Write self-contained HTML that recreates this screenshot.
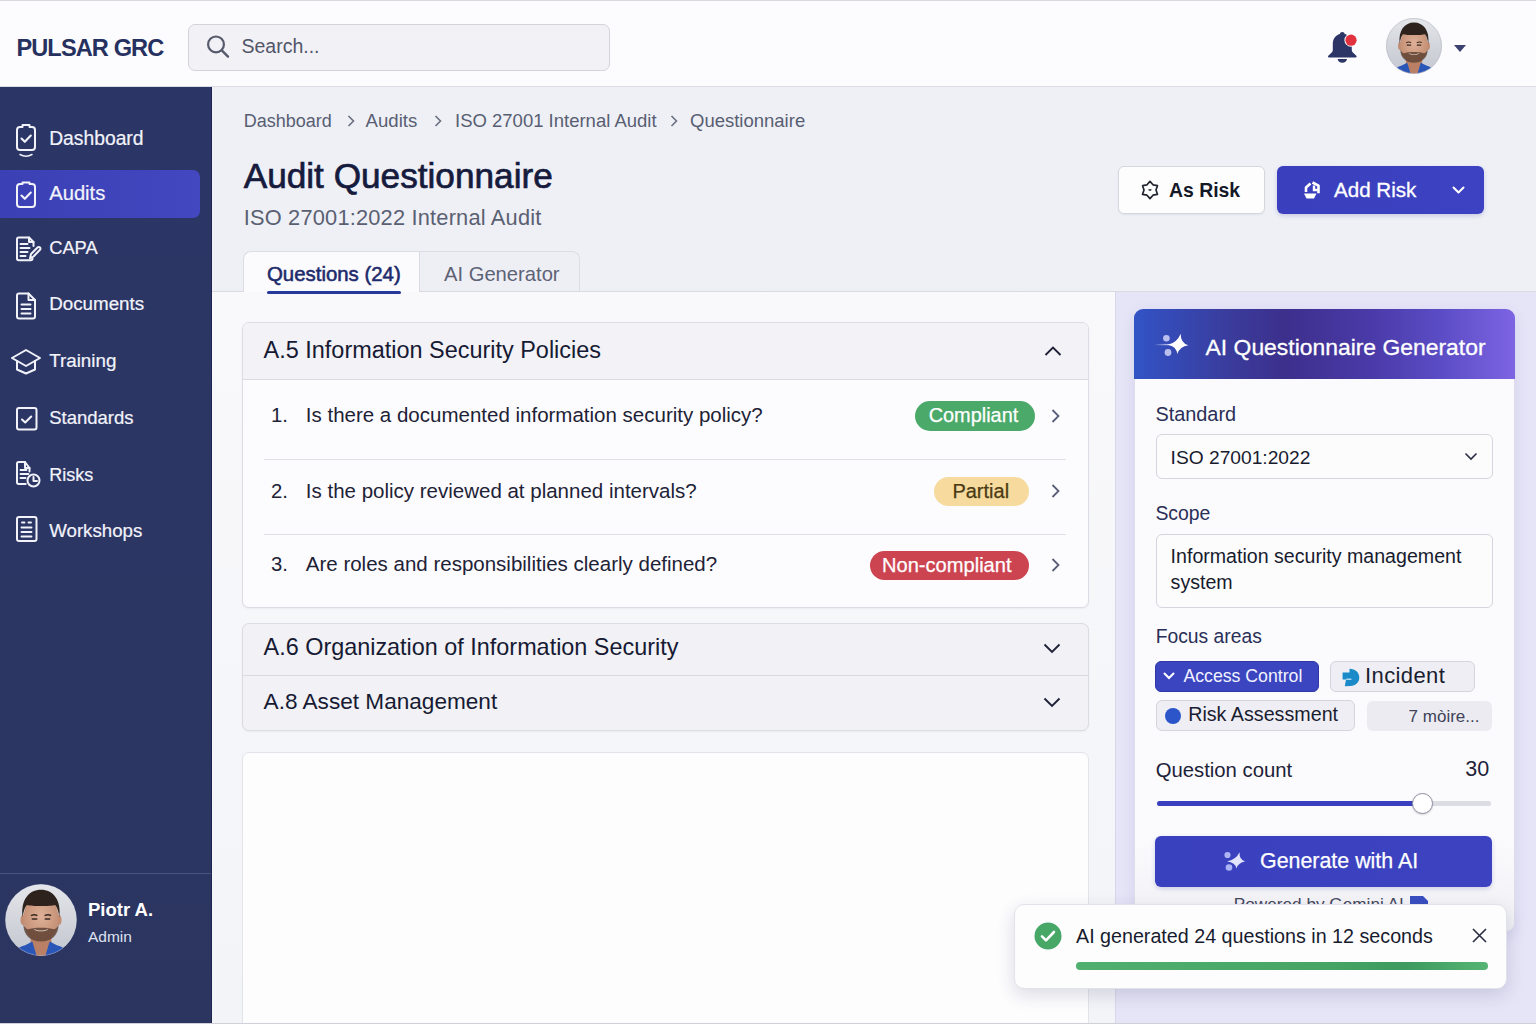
<!DOCTYPE html>
<html><head><meta charset="utf-8"><style>
html,body{margin:0;padding:0;width:1536px;height:1024px;overflow:hidden;background:#f8f8fb;}
body{position:relative;font-family:"Liberation Sans",sans-serif;}
.t{position:absolute;white-space:nowrap;line-height:1;}
.b{position:absolute;}
</style></head><body>
<div class="b" style="left:0px;top:0px;width:1536px;height:87px;background:#fcfcfe;border-top:1px solid #d9d9e0;border-bottom:1px solid #dcdde4;box-sizing:border-box;"></div>
<div class="t " style="left:16.4px;top:36.82px;font-size:23.6px;color:#27315f;font-weight:700;letter-spacing:-0.9px;">PULSAR GRC</div>
<div class="b" style="left:188px;top:23.5px;width:422px;height:47.0px;background:#f1f1f6;border:1.5px solid #d3d3da;border-radius:7px;box-sizing:border-box;"></div>
<svg class="b" style="left:203px;top:32px" width="30" height="30" viewBox="0 0 30 30"><circle cx="13" cy="12.4" r="7.9" fill="none" stroke="#575a6c" stroke-width="2.2"/><line x1="18.8" y1="18.3" x2="25" y2="24.6" stroke="#575a6c" stroke-width="2.4" stroke-linecap="round"/></svg>
<div class="t " style="left:241.5px;top:37.49px;font-size:19.5px;color:#535669;font-weight:400;">Search...</div>
<svg class="b" style="left:1325px;top:29px" width="36" height="36" viewBox="0 0 36 36"><path d="M17.3 3c-1.3 0-2.3.9-2.4 2.1C10.2 6.3 7.8 10.3 7.8 15.3v5.6c0 1-.4 2-1.1 2.7l-3.4 3.2c-.7.7-.2 1.8.8 1.8h26.4c1 0 1.5-1.1.8-1.8l-3.4-3.2c-.7-.7-1.1-1.7-1.1-2.7v-5.6c0-5-2.4-9-7.1-10.2-.1-1.2-1.1-2.1-2.4-2.1z" fill="#2d3566"/><path d="M12.6 30h9.4c-.3 2.4-2.2 3.8-4.7 3.8s-4.4-1.4-4.7-3.8z" fill="#2d3566"/><circle cx="26" cy="11.2" r="6.6" fill="#fcfcfe"/><circle cx="26" cy="11.2" r="5.6" fill="#e2323f"/></svg>
<svg class="b" style="left:1386.0px;top:17.5px" width="56" height="56" viewBox="0 0 100 100"><defs><clipPath id="ch"><circle cx="50" cy="50" r="49.5"/></clipPath><linearGradient id="gh" x1="0" y1="0" x2="0" y2="1"><stop offset="0" stop-color="#e4e6ea"/><stop offset="0.6" stop-color="#cfd2d9"/><stop offset="1" stop-color="#c3c7cf"/></linearGradient><radialGradient id="kh" cx="0.5" cy="0.45" r="0.6"><stop offset="0" stop-color="#deb097"/><stop offset="1" stop-color="#c08b70"/></radialGradient></defs><g clip-path="url(#ch)"><rect width="100" height="100" fill="url(#gh)"/><path d="M36 72h28l2 28H34z" fill="#b98066"/><path d="M10 100c2-8 8-12 18-15l10-5 6 20z" fill="#2a56b8"/><path d="M90 100c-2-8-8-12-18-15l-10-5-6 20z" fill="#2a56b8"/><ellipse cx="25.5" cy="50" rx="4" ry="7" fill="#c28c71"/><ellipse cx="74.5" cy="50" rx="4" ry="7" fill="#c28c71"/><ellipse cx="50" cy="48" rx="24.5" ry="32" fill="url(#kh)"/><path d="M25.5 56c0 15 10 24 24.5 24s24.5-9 24.5-24c-2 5-4 7-7 7-5-3-30-3-35 0-3 0-5-2-7-7z" fill="#5a3d30" opacity="0.8"/><path d="M40 62c5 3.5 15 3.5 20 0-2 5-18 5-20 0z" fill="#f2e6de"/><path d="M24.5 46c-3-24 9-38 25.5-38s28.5 14 25.5 38c-1-8-3-14-6-17-7 2-32 2-39 0-3 3-5 9-6 17z" fill="#2e221d"/><path d="M36 44q5-2.5 9 0M55 44q5-2.5 9 0" stroke="#3a2a22" stroke-width="2" fill="none"/><path d="M38 48.5h6M56 48.5h6" stroke="#3b2a22" stroke-width="2.2" stroke-linecap="round"/></g><circle cx="50" cy="50" r="49.3" fill="none" stroke="#b8b9c4" stroke-width="1.2"/></svg>
<svg class="b" style="left:1453px;top:44px" width="14" height="9" viewBox="0 0 14 9"><path d="M1 1h12L7 8z" fill="#3b4170"/></svg>
<div class="b" style="left:0px;top:87px;width:212px;height:937px;background:linear-gradient(180deg,#2c3666 0%,#2c3663 60%,#2b3560 100%);border-right:1px solid #1f2550;box-sizing:border-box;"></div>
<div class="b" style="left:0px;top:170px;width:200px;height:47.5px;background:linear-gradient(90deg,#3b40b4,#4347c0);border-radius:0 7px 7px 0;"></div>
<div class="b" style="left:0px;top:873px;width:211px;height:1px;background:#4a5282;"></div>
<div class="t " style="left:49.2px;top:128.66px;font-size:19.3px;color:#f2f3fb;font-weight:400;-webkit-text-stroke:0.2px #f2f3fb;">Dashboard</div>
<div class="t " style="left:49.2px;top:182.90px;font-size:20.2px;color:#f2f3fb;font-weight:400;-webkit-text-stroke:0.2px #f2f3fb;">Audits</div>
<div class="t " style="left:49.2px;top:239.11px;font-size:18.3px;color:#f2f3fb;font-weight:400;-webkit-text-stroke:0.2px #f2f3fb;">CAPA</div>
<div class="t " style="left:49.2px;top:295.09px;font-size:18.8px;color:#f2f3fb;font-weight:400;-webkit-text-stroke:0.2px #f2f3fb;">Documents</div>
<div class="t " style="left:49.2px;top:352.09px;font-size:18.8px;color:#f2f3fb;font-weight:400;-webkit-text-stroke:0.2px #f2f3fb;">Training</div>
<div class="t " style="left:49.2px;top:409.34px;font-size:18.5px;color:#f2f3fb;font-weight:400;-webkit-text-stroke:0.2px #f2f3fb;">Standards</div>
<div class="t " style="left:49.2px;top:466.26px;font-size:18px;color:#f2f3fb;font-weight:400;-webkit-text-stroke:0.2px #f2f3fb;">Risks</div>
<div class="t " style="left:49.2px;top:522.17px;font-size:18.7px;color:#f2f3fb;font-weight:400;-webkit-text-stroke:0.2px #f2f3fb;">Workshops</div>
<svg class="b" style="left:14px;top:122px" width="24" height="37" viewBox="0 0 24 37" fill="none" stroke="#f1f2fa" stroke-width="2" stroke-linecap="round" stroke-linejoin="round"><path d="M6 5h2.5V3h7v2H18c1.7 0 3 1.3 3 3v17c0 1.7-1.3 3-3 3H6c-1.7 0-3-1.3-3-3V8c0-1.7 1.3-3 3-3z"/><path d="M7.5 16.5l3.3 3.3 6-6.3" stroke-width="2.1"/><path d="M6 32.5c3.5 2 8.5 2 12 0" stroke-width="1.5"/></svg>
<svg class="b" style="left:14px;top:180px" width="24" height="29" viewBox="0 0 24 29" fill="none" stroke="#f1f2fa" stroke-width="2" stroke-linecap="round" stroke-linejoin="round"><path d="M6 4h2.5V2.5h7V4H18c1.7 0 3 1.3 3 3v17c0 1.7-1.3 3-3 3H6c-1.7 0-3-1.3-3-3V7c0-1.7 1.3-3 3-3z"/><path d="M3.5 4.5h4M16.5 4.5h4" stroke-width="1.2"/><path d="M7.5 15.5l3.3 3.3 6-6.3" stroke-width="2.1"/></svg>
<svg class="b" style="left:14px;top:235px" width="28" height="28" viewBox="0 0 28 28" fill="none" stroke="#f1f2fa" stroke-width="2" stroke-linecap="round" stroke-linejoin="round"><path d="M19.5 11V7L15 2.5H4.7C3.8 2.5 3 3.2 3 4.2v19.3c0 1 .8 1.7 1.7 1.7h12.1c1 0 1.7-.7 1.7-1.7"/><path d="M15 2.5V7h4.5"/><path d="M6.5 9h7M6.5 13h9M6.5 17h7M6.5 21h5" stroke-width="2"/><path d="M16 23.5l1-4.5 6.5-6.5c.8-.8 2-.8 2.5 0 .6.6.6 1.7 0 2.3L19.5 21.5z"/></svg>
<svg class="b" style="left:14px;top:291px" width="24" height="30" viewBox="0 0 24 30" fill="none" stroke="#f1f2fa" stroke-width="2" stroke-linecap="round" stroke-linejoin="round"><path d="M5 2.5h9.5L21 9v16.5c0 1.1-.9 2-2 2H5c-1.1 0-2-.9-2-2v-21c0-1.1.9-2 2-2z"/><path d="M14.5 2.5V9H21" /><path d="M7.5 13.5h9M7.5 18h9M7.5 22.5h9" stroke-width="2"/></svg>
<svg class="b" style="left:10px;top:347px" width="32" height="28" viewBox="0 0 32 28" fill="none" stroke="#f1f2fa" stroke-width="2" stroke-linecap="round" stroke-linejoin="round"><path d="M16 3L2 11l14 8 14-8z"/><path d="M7 14v8.5l9 4 9-4V14"/></svg>
<svg class="b" style="left:14px;top:405px" width="25" height="27" viewBox="0 0 25 27" fill="none" stroke="#f1f2fa" stroke-width="2" stroke-linecap="round" stroke-linejoin="round"><rect x="3" y="3" width="19.5" height="21.5" rx="2"/><path d="M8 14.5l3.2 3 6-6" stroke-width="2.1"/></svg>
<svg class="b" style="left:14px;top:459px" width="28" height="30" viewBox="0 0 28 30" fill="none" stroke="#f1f2fa" stroke-width="2" stroke-linecap="round" stroke-linejoin="round"><path d="M15.5 12.5V9L11 3H4.7C3.8 3 3 3.8 3 4.7v18.6c0 1 .8 1.7 1.7 1.7h7"/><path d="M11 3v6h4.5"/><path d="M6.5 11h6M6.5 15h8M6.5 19h5" stroke-width="1.9"/><circle cx="19.5" cy="21.5" r="6"/><path d="M19.5 18v4h3.5"/></svg>
<svg class="b" style="left:14px;top:514px" width="25" height="30" viewBox="0 0 25 30" fill="none" stroke="#f1f2fa" stroke-width="2" stroke-linecap="round" stroke-linejoin="round"><rect x="3" y="3" width="19.5" height="24" rx="2"/><path d="M8 8.5h2.5M14.5 8.5H17M7.5 13.5h10M7.5 18h10M7.5 22.5h10" stroke-width="1.9"/></svg>
<svg class="b" style="left:5.0px;top:883.5px" width="72" height="72" viewBox="0 0 100 100"><defs><clipPath id="cs"><circle cx="50" cy="50" r="49.5"/></clipPath><linearGradient id="gs" x1="0" y1="0" x2="0" y2="1"><stop offset="0" stop-color="#e4e6ea"/><stop offset="0.6" stop-color="#cfd2d9"/><stop offset="1" stop-color="#c3c7cf"/></linearGradient><radialGradient id="ks" cx="0.5" cy="0.45" r="0.6"><stop offset="0" stop-color="#deb097"/><stop offset="1" stop-color="#c08b70"/></radialGradient></defs><g clip-path="url(#cs)"><rect width="100" height="100" fill="url(#gs)"/><path d="M36 72h28l2 28H34z" fill="#b98066"/><path d="M10 100c2-8 8-12 18-15l10-5 6 20z" fill="#2a56b8"/><path d="M90 100c-2-8-8-12-18-15l-10-5-6 20z" fill="#2a56b8"/><ellipse cx="25.5" cy="50" rx="4" ry="7" fill="#c28c71"/><ellipse cx="74.5" cy="50" rx="4" ry="7" fill="#c28c71"/><ellipse cx="50" cy="48" rx="24.5" ry="32" fill="url(#ks)"/><path d="M25.5 56c0 15 10 24 24.5 24s24.5-9 24.5-24c-2 5-4 7-7 7-5-3-30-3-35 0-3 0-5-2-7-7z" fill="#5a3d30" opacity="0.8"/><path d="M40 62c5 3.5 15 3.5 20 0-2 5-18 5-20 0z" fill="#f2e6de"/><path d="M24.5 46c-3-24 9-38 25.5-38s28.5 14 25.5 38c-1-8-3-14-6-17-7 2-32 2-39 0-3 3-5 9-6 17z" fill="#2e221d"/><path d="M36 44q5-2.5 9 0M55 44q5-2.5 9 0" stroke="#3a2a22" stroke-width="2" fill="none"/><path d="M38 48.5h6M56 48.5h6" stroke="#3b2a22" stroke-width="2.2" stroke-linecap="round"/></g><circle cx="50" cy="50" r="49.3" fill="none" stroke="rgba(230,232,240,0.35)" stroke-width="1"/></svg>
<div class="t " style="left:88px;top:900.64px;font-size:18.5px;color:#ffffff;font-weight:700;">Piotr A.</div>
<div class="t " style="left:88px;top:929.28px;font-size:15.5px;color:#dfe2f0;font-weight:400;">Admin</div>
<div class="b" style="left:212px;top:87px;width:1324px;height:204px;background:#eef0f6;"></div>
<div class="t " style="left:243.7px;top:112.06px;font-size:18px;color:#585e72;font-weight:400;">Dashboard</div>
<div class="t " style="left:365.6px;top:111.56px;font-size:18.6px;color:#585e72;font-weight:400;">Audits</div>
<div class="t " style="left:455px;top:111.64px;font-size:18.5px;color:#585e72;font-weight:400;">ISO 27001 Internal Audit</div>
<div class="t " style="left:690px;top:111.64px;font-size:18.5px;color:#585e72;font-weight:400;">Questionnaire</div>
<svg class="b" style="left:345.5px;top:114px" width="10" height="14" viewBox="0 0 10 14"><path d="M2.5 2l5 5-5 5" fill="none" stroke="#6a6f80" stroke-width="1.6"/></svg>
<svg class="b" style="left:432.5px;top:114px" width="10" height="14" viewBox="0 0 10 14"><path d="M2.5 2l5 5-5 5" fill="none" stroke="#6a6f80" stroke-width="1.6"/></svg>
<svg class="b" style="left:669px;top:114px" width="10" height="14" viewBox="0 0 10 14"><path d="M2.5 2l5 5-5 5" fill="none" stroke="#6a6f80" stroke-width="1.6"/></svg>
<div class="t " style="left:243.7px;top:157.90px;font-size:35.2px;color:#161b3d;font-weight:400;-webkit-text-stroke:0.7px #161b3d;">Audit Questionnaire</div>
<div class="t " style="left:243.7px;top:207.15px;font-size:21.8px;color:#5a6072;font-weight:400;letter-spacing:0.2px;">ISO 27001:2022 Internal Audit</div>
<div class="b" style="left:1118px;top:166px;width:147px;height:48px;background:#fdfdfe;border:1px solid #d6d7de;border-radius:6px;box-sizing:border-box;box-shadow:0 1px 2px rgba(20,20,60,.06);"></div>
<svg class="b" style="left:1139px;top:178.5px" width="22" height="22" viewBox="0 0 22 22"><path d="M11.00 2.40 L14.00 5.80 L18.45 6.70 L17.00 11.00 L18.45 15.30 L14.00 16.20 L11.00 19.60 L8.00 16.20 L3.55 15.30 L5.00 11.00 L3.55 6.70 L8.00 5.80z" fill="none" stroke="#22252f" stroke-width="1.7" stroke-linejoin="round"/><path d="M9.3 10.2h3.4l-.6 1.6h-2.2z" fill="#22252f"/></svg>
<div class="t " style="left:1169px;top:181.28px;font-size:19.4px;color:#151827;font-weight:700;">As Risk</div>
<div class="b" style="left:1277px;top:166px;width:207px;height:48.30000000000001px;background:linear-gradient(90deg,#3a3fbd,#3d42c2);border-radius:6px;box-shadow:0 2px 4px rgba(40,40,140,.18);"></div>
<svg class="b" style="left:1301px;top:179px" width="22" height="22" viewBox="0 0 22 22"><path d="M11.5 3.5l6 3.2v7.6M5 13V8.5l4.5-4" fill="none" stroke="#fff" stroke-width="2.6" stroke-linejoin="round"/><path d="M13 6.5v4.5h4" fill="none" stroke="#fff" stroke-width="2.4"/><path d="M3 14.5h12.5l-2.5 5H5.5z" fill="#fff"/></svg>
<div class="t " style="left:1334px;top:180.26px;font-size:20.6px;color:#ffffff;font-weight:400;-webkit-text-stroke:0.3px #fff;">Add Risk</div>
<svg class="b" style="left:1451px;top:184px" width="15" height="12" viewBox="0 0 15 12"><path d="M2.5 3.5l5 5 5-5" fill="none" stroke="#fff" stroke-width="2" stroke-linecap="round" stroke-linejoin="round"/></svg>
<div class="b" style="left:212px;top:291px;width:903px;height:733px;background:linear-gradient(180deg,#f9f9fb,#f3f4f8);border-top:1px solid #d9dae2;box-sizing:border-box;"></div>
<div class="b" style="left:1115px;top:291px;width:421px;height:733px;background:#e6e5f7;border-top:1px solid #d9dae2;border-left:1px solid #d8d7ea;box-sizing:border-box;"></div>
<div class="b" style="left:243px;top:251px;width:177px;height:41px;background:#fbfbfd;border:1px solid #dcdde4;border-bottom:none;border-radius:8px 0 0 0;box-sizing:border-box;"></div>
<div class="b" style="left:419px;top:251px;width:161px;height:40px;background:#eeeff5;border:1px solid #dcdde4;border-bottom:none;border-radius:0 8px 0 0;box-sizing:border-box;"></div>
<div class="t " style="left:267px;top:263.73px;font-size:20.4px;color:#1d2a6b;font-weight:400;-webkit-text-stroke:0.55px #1d2a6b;">Questions (24)</div>
<div class="b" style="left:267px;top:291.3px;width:134px;height:3.0px;background:#26389a;border-radius:2px;"></div>
<div class="t " style="left:444px;top:263.90px;font-size:20.2px;color:#5d6275;font-weight:400;">AI Generator</div>
<div class="b" style="left:241.5px;top:322px;width:847.0px;height:286px;background:#fcfcfe;border:1px solid #dcdde4;border-radius:7px;box-sizing:border-box;box-shadow:0 1px 2px rgba(20,20,60,.05);overflow:hidden;"></div>
<div class="b" style="left:242.5px;top:323px;width:845.0px;height:56.5px;background:#f2f2f7;border-bottom:1px solid #dadbe3;border-radius:6px 6px 0 0;box-sizing:border-box;"></div>
<div class="t " style="left:263.6px;top:339.35px;font-size:23.45px;color:#171a33;font-weight:400;">A.5 Information Security Policies</div>
<svg class="b" style="left:1043px;top:343px" width="20" height="16" viewBox="0 0 20 16"><path d="M2.5 12l7.5-7.5 7.5 7.5" fill="none" stroke="#1f2237" stroke-width="1.9"/></svg>
<div class="t " style="left:271px;top:405.32px;font-size:20.3px;color:#1e2236;font-weight:400;">1.</div>
<div class="t " style="left:305.8px;top:405.15px;font-size:20.5px;color:#1e2236;font-weight:400;">Is there a documented information security policy?</div>
<div class="b" style="left:915px;top:401px;width:119.5px;height:30px;background:#4ba96a;border-radius:16px;"></div>
<div class="t " style="left:928.7px;top:406.02px;font-size:19.9px;color:#ffffff;font-weight:400;-webkit-text-stroke:0.25px #ffffff;">Compliant</div>
<svg class="b" style="left:1049px;top:408px" width="14" height="16" viewBox="0 0 14 16"><path d="M3.5 2l6 6-6 6" fill="none" stroke="#5a5e78" stroke-width="1.8"/></svg>
<div class="t " style="left:271px;top:481.12px;font-size:20.3px;color:#1e2236;font-weight:400;">2.</div>
<div class="t " style="left:305.8px;top:480.95px;font-size:20.5px;color:#1e2236;font-weight:400;">Is the policy reviewed at planned intervals?</div>
<div class="b" style="left:934px;top:477px;width:95px;height:29px;background:#f6da9e;border-radius:16px;"></div>
<div class="t " style="left:952.4px;top:481.47px;font-size:20px;color:#4a3a14;font-weight:400;-webkit-text-stroke:0.25px #4a3a14;">Partial</div>
<svg class="b" style="left:1049px;top:483px" width="14" height="16" viewBox="0 0 14 16"><path d="M3.5 2l6 6-6 6" fill="none" stroke="#5a5e78" stroke-width="1.8"/></svg>
<div class="t " style="left:271px;top:553.82px;font-size:20.3px;color:#1e2236;font-weight:400;">3.</div>
<div class="t " style="left:305.8px;top:553.65px;font-size:20.5px;color:#1e2236;font-weight:400;">Are roles and responsibilities clearly defined?</div>
<div class="b" style="left:869.5px;top:550.6px;width:159.5px;height:29.899999999999977px;background:#cd4451;border-radius:16px;"></div>
<div class="t " style="left:882px;top:555.47px;font-size:20.1px;color:#ffffff;font-weight:400;-webkit-text-stroke:0.25px #ffffff;">Non-compliant</div>
<svg class="b" style="left:1049px;top:556.5px" width="14" height="16" viewBox="0 0 14 16"><path d="M3.5 2l6 6-6 6" fill="none" stroke="#5a5e78" stroke-width="1.8"/></svg>
<div class="b" style="left:264px;top:459px;width:802px;height:1px;background:#e0e1e7;"></div>
<div class="b" style="left:264px;top:534px;width:802px;height:1px;background:#e0e1e7;"></div>
<div class="b" style="left:241.5px;top:622.5px;width:847.0px;height:108.0px;background:#f1f1f6;border:1px solid #dadbe3;border-radius:7px;box-sizing:border-box;box-shadow:0 1px 2px rgba(20,20,60,.05);"></div>
<div class="b" style="left:242.5px;top:675px;width:845.0px;height:1px;background:#d8d9e1;"></div>
<div class="t " style="left:263.6px;top:635.89px;font-size:23.4px;color:#171a33;font-weight:400;">A.6 Organization of Information Security</div>
<div class="t " style="left:263.6px;top:690.67px;font-size:22.6px;color:#171a33;font-weight:400;">A.8 Asset Management</div>
<svg class="b" style="left:1042px;top:640px" width="20" height="16" viewBox="0 0 20 16"><path d="M2.5 4.5l7.5 7.5 7.5-7.5" fill="none" stroke="#1f2237" stroke-width="1.9"/></svg>
<svg class="b" style="left:1042px;top:694px" width="20" height="16" viewBox="0 0 20 16"><path d="M2.5 4.5l7.5 7.5 7.5-7.5" fill="none" stroke="#1f2237" stroke-width="1.9"/></svg>
<div class="b" style="left:241.5px;top:752px;width:847.0px;height:278px;background:#fdfdfe;border:1px solid #e3e4ea;border-radius:7px;box-sizing:border-box;"></div>
<div class="b" style="left:1134px;top:309px;width:381px;height:623px;background:linear-gradient(180deg,#fbfbfd 85%,#f0f0f5 100%);border:1px solid #dedde9;border-radius:9px;box-sizing:border-box;box-shadow:0 4px 14px rgba(80,70,170,.13);"></div>
<div class="b" style="left:1134px;top:309px;width:381px;height:70px;background:linear-gradient(90deg,#3253c6 0%,#3a3c9c 25%,#3d2f8c 40%,#4a3aa8 62%,#5a4cc4 80%,#7d64e2 100%);border-radius:9px 9px 0 0;"></div>
<svg class="b" style="left:1150px;top:325px" width="50" height="40" viewBox="0 0 50 40"><defs><linearGradient id="tl" gradientUnits="userSpaceOnUse" x1="4" y1="0" x2="21" y2="0"><stop offset="0" stop-color="#fff" stop-opacity="0"/><stop offset="1" stop-color="#fff" stop-opacity=".8"/></linearGradient></defs><path d="M4 19.6H21" stroke="url(#tl)" stroke-width="1.3"/><path d="M30.7 8.8Q30.5 18.0 38.3 20.3Q29.9 21.5 27.3 29.0Q26.3 21.4 18.0 19.8Q26.9 17.9 30.7 8.8z" fill="#fff"/><circle cx="16.4" cy="13.3" r="3.3" fill="#b9bff0"/><circle cx="18" cy="27.5" r="3.4" fill="#b9bff0"/></svg>
<div class="t " style="left:1205.6px;top:335.82px;font-size:22.9px;color:#ffffff;font-weight:400;-webkit-text-stroke:0.3px #fff;">AI Questionnaire Generator</div>
<div class="t " style="left:1155.4px;top:405.35px;font-size:19.9px;color:#2a2f57;font-weight:400;">Standard</div>
<div class="b" style="left:1156px;top:434.4px;width:337px;height:45.0px;background:#fcfcfd;border:1px solid #d4d5dd;border-radius:6px;box-sizing:border-box;"></div>
<div class="t " style="left:1170.6px;top:448.15px;font-size:19.2px;color:#181b2e;font-weight:400;">ISO 27001:2022</div>
<svg class="b" style="left:1463px;top:450px" width="16" height="12" viewBox="0 0 16 12"><path d="M2.5 3.5l5.5 5.5 5.5-5.5" fill="none" stroke="#2a2d44" stroke-width="1.6"/></svg>
<div class="t " style="left:1155.4px;top:504.38px;font-size:19.4px;color:#2a2f57;font-weight:400;">Scope</div>
<div class="b" style="left:1156px;top:533.5px;width:337px;height:74.5px;background:#fcfcfd;border:1px solid #d4d5dd;border-radius:6px;box-sizing:border-box;"></div>
<div class="t " style="left:1170.6px;top:546.81px;font-size:19.6px;color:#181b2e;font-weight:400;">Information security management</div>
<div class="t " style="left:1170.6px;top:572.71px;font-size:19.6px;color:#181b2e;font-weight:400;">system</div>
<div class="t " style="left:1155.7px;top:627.06px;font-size:19.3px;color:#2a2f57;font-weight:400;">Focus areas</div>
<div class="b" style="left:1155px;top:660.5px;width:164px;height:31.799999999999955px;background:#3b45c0;border:1px solid #2f38a8;border-radius:6px;box-sizing:border-box;"></div>
<svg class="b" style="left:1162px;top:670px" width="14" height="12" viewBox="0 0 14 12"><path d="M2.5 3.5l4.5 4.5 4.5-4.5" fill="none" stroke="#fff" stroke-width="2" stroke-linecap="round"/></svg>
<div class="t " style="left:1183.4px;top:668.02px;font-size:17.7px;color:#f2f3ff;font-weight:400;">Access Control</div>
<div class="b" style="left:1330.3px;top:661px;width:145.0px;height:31.299999999999955px;background:#eeeef4;border:1px solid #d3d4dd;border-radius:6px;box-sizing:border-box;"></div>
<svg class="b" style="left:1341.5px;top:667.5px" width="18" height="19" viewBox="0 0 18 19"><path d="M7.5 .8C13.2.8 17.3 4.6 17.3 9.5S13.5 18 8.5 18L2.8 18.3 4 11.6H.6V4.6h6.9z" fill="#1a8ac9"/><path d="M4.2 11.2h5.2" stroke="#dff2fb" stroke-width="1.1"/></svg>
<div class="t " style="left:1365px;top:665.18px;font-size:22px;color:#1a1d30;font-weight:400;letter-spacing:0.4px;">Incident</div>
<div class="b" style="left:1155.7px;top:700.2px;width:199.20000000000005px;height:30.59999999999991px;background:#eeeef4;border:1px solid #d3d4dd;border-radius:6px;box-sizing:border-box;"></div>
<div class="b" style="left:1165.3px;top:707.5px;width:16.100000000000136px;height:16.100000000000023px;background:#2b55c9;border-radius:50%;"></div>
<div class="t " style="left:1188.2px;top:705.32px;font-size:19.7px;color:#1a1d30;font-weight:400;">Risk Assessment</div>
<div class="b" style="left:1367px;top:700.7px;width:124.70000000000005px;height:30.09999999999991px;background:#ebebf1;border-radius:6px;"></div>
<div class="t " style="left:1408.6px;top:707.61px;font-size:17px;color:#404358;font-weight:400;">7 m&ograve;ire...</div>
<div class="t " style="left:1155.7px;top:759.82px;font-size:20.3px;color:#1e2238;font-weight:400;">Question count</div>
<div class="t " style="left:1465.2px;top:758.80px;font-size:21.5px;color:#1e2238;font-weight:400;">30</div>
<div class="b" style="left:1157px;top:800.5px;width:333.5px;height:5.5px;background:#dcdce3;border-radius:3px;"></div>
<div class="b" style="left:1157px;top:800.5px;width:265px;height:5.5px;background:#3a3fbf;border-radius:3px;"></div>
<div class="b" style="left:1411.5px;top:793px;width:21.0px;height:21px;background:#fff;border:1.2px solid #8c8ea0;border-radius:50%;box-sizing:border-box;box-shadow:0 1px 2px rgba(0,0,0,.15);"></div>
<div class="b" style="left:1155.3px;top:836.4px;width:336.70000000000005px;height:50.60000000000002px;background:linear-gradient(90deg,#3a41be,#3c42c0);border-radius:6px;box-shadow:0 2px 5px rgba(50,50,160,.2);"></div>
<svg class="b" style="left:1215px;top:845px" width="40" height="32" viewBox="0 0 40 32"><path d="M24.5 7.2Q24.2 14.7 30.2 16.3Q23.6 17.5 21.3 23.4Q20.5 17.5 12.0 16.3Q21.0 14.7 24.5 7.2z" fill="#e2e4fb"/><circle cx="12.5" cy="10" r="3.1" fill="#adb4f5"/><circle cx="14" cy="22.5" r="3.3" fill="#adb4f5"/></svg>
<div class="t " style="left:1260px;top:851.48px;font-size:21.4px;color:#ffffff;font-weight:400;-webkit-text-stroke:0.25px #fff;">Generate with AI</div>
<div class="t " style="left:1233.8px;top:895.94px;font-size:17.2px;color:#45485e;font-weight:400;">Powered by Gemini AI</div>
<svg class="b" style="left:1408px;top:894px" width="22" height="14" viewBox="0 0 22 14"><path d="M2 2h13l5 5v7H2z" fill="#3a4fc0"/></svg>
<div class="b" style="left:1014px;top:903.5px;width:492.70000000000005px;height:85.0px;background:#fdfdfe;border:1px solid #e2e2ea;border-radius:10px;box-sizing:border-box;box-shadow:0 6px 18px rgba(40,40,90,.16);"></div>
<svg class="b" style="left:1033.5px;top:922px" width="28" height="28" viewBox="0 0 28 28"><circle cx="14" cy="14" r="13.5" fill="#46a767"/><path d="M8 14.3l4 4 8-8.3" fill="none" stroke="#fff" stroke-width="2.6" stroke-linecap="round" stroke-linejoin="round"/></svg>
<div class="t " style="left:1076px;top:927.22px;font-size:19.7px;color:#181b2e;font-weight:400;">AI generated 24 questions in 12 seconds</div>
<svg class="b" style="left:1471px;top:927px" width="17" height="17" viewBox="0 0 17 17"><path d="M2 2l13 13M15 2L2 15" stroke="#2a2d40" stroke-width="1.6"/></svg>
<div class="b" style="left:1076px;top:962.2px;width:411.79999999999995px;height:8.199999999999932px;background:linear-gradient(90deg,#4fb06f,#46a565 60%,#3e9a5e 80%,#55b474);border-radius:5px;"></div>
<div class="b" style="left:0px;top:1023px;width:1536px;height:1px;background:#d0d1d8;"></div>
</body></html>
